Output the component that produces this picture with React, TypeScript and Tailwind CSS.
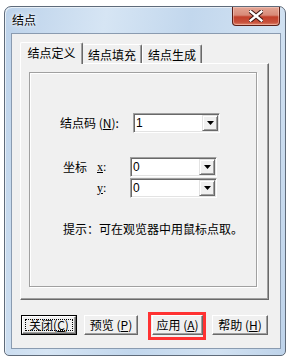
import React from "react";

const font = "font-['Noto_Sans_CJK_SC','Noto_Sans',sans-serif]";

function U({ c }: { c: string }) {
  return <span className="underline underline-offset-[1px]">{c}</span>;
}

function Combo({ value }: { value: string }) {
  return (
    <div className="w-[87px] h-[20px] border border-t-[#a0a0a0] border-l-[#a0a0a0] border-r-white border-b-white bg-white shadow-[inset_1px_1px_0_#696969,inset_-1px_-1px_0_#e3e3e3] flex items-center justify-between">
      <span className="pl-[2px] text-[12px] leading-[14px] font-['Liberation_Sans',sans-serif]">{value}</span>
      <div className="w-[16px] h-[16px] mr-[1px] bg-[#f0f0f0] border border-t-[#e3e3e3] border-l-[#e3e3e3] border-r-[#696969] border-b-[#696969] shadow-[inset_1px_1px_0_white,inset_-1px_-1px_0_#a0a0a0] flex items-center justify-center">
        <svg width="7" height="4" viewBox="0 0 7 4">
          <path d="M0 0H7L3.5 4Z" fill="#000" />
        </svg>
      </div>
    </div>
  );
}

function Btn({
  w,
  children,
  def,
  className = "",
}: {
  w: string;
  children: React.ReactNode;
  def?: boolean;
  className?: string;
}) {
  return (
    <div className={`${w} h-[20px] ${className} ${def ? "border border-black" : ""}`}>
      <div className="w-full h-full border border-t-white border-l-white border-r-[#696969] border-b-[#696969] shadow-[inset_-1px_-1px_0_#a0a0a0] bg-[#f0f0f0] flex items-center justify-center relative">
        {def && <div className="absolute inset-[2px] border border-dotted border-black" />}
        <span className="text-[12px] leading-[14px] whitespace-nowrap">{children}</span>
      </div>
    </div>
  );
}

export default function App() {
  return (
    <div className={`w-[292px] h-[357px] bg-white relative overflow-hidden text-black ${font}`}>
      <div className="ml-[4px] mt-[6px] w-[282px] h-[350px] rounded-t-[7px] rounded-b-[5px] border border-[#5f6b7a] bg-[linear-gradient(100deg,#bcd2ea_0%,#d6e5f4_30%,#c2d7ed_55%,#d2e2f2_80%,#bed3ea_100%)] shadow-[inset_1px_1px_0_#e8f0f8] flex flex-col">
        <div className="h-[26px] flex items-start justify-between">
          <div className="h-[26px] flex items-center pl-[7px] text-[12px] leading-[14px] [text-shadow:0_0_6px_#ffffff,0_0_3px_#ffffff]">
            结点
          </div>
          <div className="mr-[5px] w-[48px] h-[19px] rounded-b-[4px] border border-t-0 border-[#5a1e16] bg-[linear-gradient(180deg,#e3a594_0%,#d88a78_45%,#c2402b_55%,#c8513c_85%,#e08a6f_100%)] shadow-[inset_0_0_0_1px_rgba(255,220,210,0.45)] flex items-center justify-center">
            <svg width="14" height="12" viewBox="0 0 14 12">
              <path
                d="M1.5 1.5L12.5 10.5M12.5 1.5L1.5 10.5"
                stroke="#3b1410"
                strokeWidth="4.4"
                strokeLinecap="square"
              />
              <path
                d="M1.5 1.5L12.5 10.5M12.5 1.5L1.5 10.5"
                stroke="#ffffff"
                strokeWidth="2.4"
                strokeLinecap="square"
              />
            </svg>
          </div>
        </div>
        <div className="ml-[6px] w-[270px] h-[316px] border border-[#8a9bb0] bg-[#f0f0f0] relative">
          <div className="pl-[8px] pt-[8px]">
            {/* tabs */}
            <div className="flex items-end h-[22px] relative z-10 mb-[-1px]">
              <div className="w-[63px] h-[22px] bg-[#f0f0f0] rounded-t-[2px] border-t border-l border-r border-t-white border-l-white border-r-[#696969] shadow-[inset_-1px_0_0_#a0a0a0] flex justify-center pt-[3px] text-[12px] leading-[14px]">
                结点定义
              </div>
              <div className="w-[59px] h-[19px] mb-[1px] bg-[#f0f0f0] rounded-t-[2px] border-t border-r border-t-white border-r-[#696969] shadow-[inset_-1px_0_0_#a0a0a0] flex justify-center pt-[3px] text-[12px] leading-[14px]">
                结点填充
              </div>
              <div className="w-[60px] h-[19px] mb-[1px] bg-[#f0f0f0] rounded-t-[2px] border-t border-l border-r border-t-white border-l-white border-r-[#696969] shadow-[inset_-1px_0_0_#a0a0a0] flex justify-center pt-[3px] text-[12px] leading-[14px]">
                结点生成
              </div>
            </div>
            {/* panel */}
            <div className="w-[249px] h-[237px] border border-t-white border-l-white border-r-[#696969] border-b-[#696969] shadow-[inset_-1px_-1px_0_#a0a0a0] pl-[8px] pt-[8px]">
              <div className="w-[228px] h-[215px] border border-[#a0a0a0] shadow-[1px_1px_0_#ffffff,inset_1px_1px_0_#ffffff] pt-[40px] pl-[30px] text-[12px] leading-[14px]">
                <div className="flex items-center h-[20px]">
                  <span className="w-[73px] whitespace-nowrap">
                    结点码 (<U c="N" />):
                  </span>
                  <Combo value="1" />
                </div>
                <div className="flex items-center h-[20px] mt-[24px]">
                  <span className="w-[37px] pl-[3px]">坐标</span>
                  <span className="w-[33px] font-['Liberation_Serif',serif]">
                    <U c="x" />:
                  </span>
                  <Combo value="0" />
                </div>
                <div className="flex items-center h-[20px] mt-[1px]">
                  <span className="w-[37px]" />
                  <span className="w-[33px] font-['Liberation_Serif',serif]">
                    <U c="y" />:
                  </span>
                  <Combo value="0" />
                </div>
                <div className="mt-[24px] pl-[3px] whitespace-nowrap">提示：可在观览器中用鼠标点取。</div>
              </div>
            </div>
            {/* buttons */}
            <div className="flex mt-[15px] h-[20px]">
              <Btn w="w-[56px]" def className="ml-[1px]">
                关闭(<U c="C" />)
              </Btn>
              <Btn w="w-[54px]" className="ml-[7px]">
                预览 (<U c="P" />)
              </Btn>
              <Btn w="w-[51px]" className="ml-[14px]">
                应用 (<U c="A" />)
              </Btn>
              <Btn w="w-[56px]" className="ml-[9px]">
                帮助 (<U c="H" />)
              </Btn>
            </div>
          </div>
        </div>
      </div>
      <div className="absolute left-[148px] top-[312px] w-[58px] h-[28px] border-[3px] border-[#ff3232]" />
    </div>
  );
}
